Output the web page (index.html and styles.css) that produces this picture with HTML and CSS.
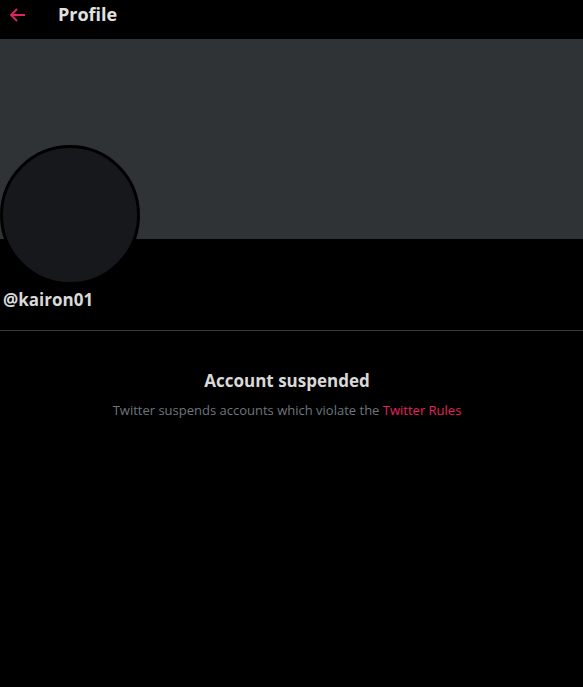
FILE: index.html
```html
<!DOCTYPE html>
<html>
<head>
<meta charset="utf-8">
<link rel="stylesheet" href="styles.css">
</head>
<body>
<div class="header">
  <svg class="back" width="16" height="14" viewBox="0 0 16 14"><path d="M16 7H2M8 1L2 7l6 6" fill="none" stroke="#e0245e" stroke-width="1.8"/></svg>
  <span class="title">Profile</span>
</div>
<div class="banner"></div>
<div class="avatar"></div>
<div class="handle">@kairon01</div>
<div class="divider"></div>
<div class="suspended">
  <div class="s-title">Account suspended</div>
  <div class="s-text">Twitter suspends accounts which violate the <span class="link">Twitter Rules</span></div>
</div>
</body>
</html>
```
FILE: styles.css
```css
html, body { margin: 0; padding: 0; background: #000; }
body { font-family: "Open Sans", "Noto Sans", sans-serif; color: #d9d9d9; height: 687px; }
.header { height: 39px; display: flex; align-items: flex-start; padding-left: 9px; }
.back { display: block; margin-top: 8px; }
.title { margin-left: 33px; margin-top: 2px; font-weight: 700; font-size: 18px; line-height: 24px; color: #e1e1e1; }
.banner { height: 200px; background: #2f3336; }
.avatar { width: 134px; height: 134px; border: 3.5px solid #000; border-radius: 50%; background: #16181c; margin-top: -94px; margin-left: 0; }
.handle { font-weight: 700; font-size: 17px; padding-left: 3px; margin-top: 3px; line-height: 24px; }
.divider { height: 1px; background: #38393b; margin-top: 18px; }
.suspended { text-align: center; padding-top: 38px; padding-right: 9px; }
.s-title { font-weight: 700; font-size: 17px; line-height: 24px; }
.s-text { font-size: 13px; color: #6e767d; margin-top: 8px; }
.link { color: #e0245e; }
```
